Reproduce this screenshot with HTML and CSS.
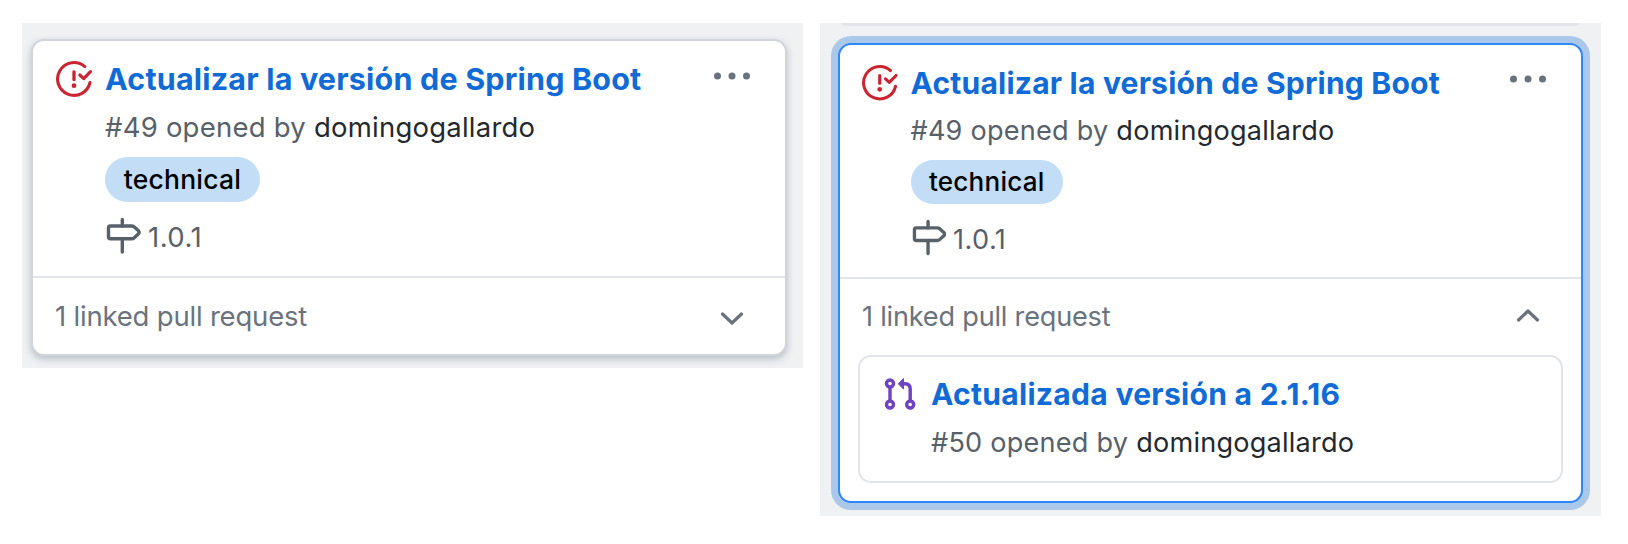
FILE: index.html
```html
<!DOCTYPE html>
<html lang="es">
<head>
<meta charset="utf-8">
<title>Project cards</title>
<link rel="stylesheet" href="styles.css">
</head>
<body>
<svg class="defs" aria-hidden="true">
  <symbol id="issue" viewBox="0 0 38 38">
    <g fill="none" stroke="currentColor" stroke-width="3.1" stroke-linecap="round" stroke-linejoin="round">
      <path d="M29.800 6.600A16.400 16.400 0 1 0 35 22.600"/>
      <path d="M24.800 15L28.700 18.600L35.500 11.600"/>
      <path d="M19 11.800V19.500" stroke-width="3.300"/>
    </g>
    <circle cx="19" cy="25.700" r="2.400" fill="currentColor"/>
  </symbol>
  <symbol id="milestone" viewBox="0 0 36 38">
    <g fill="none" stroke="currentColor" stroke-width="3.400" stroke-linecap="round" stroke-linejoin="round">
      <path d="M17.300 2.500V9M17.300 21.800V35"/>
      <path d="M5.300 9H26.500Q28 9 29 9.800L33.300 13.600Q35 15.300 33.300 17L29 20.900Q28 21.800 26.500 21.800H5.300Q3.500 21.800 3.500 20V10.800Q3.500 9 5.300 9Z"/>
    </g>
  </symbol>
  <symbol id="pull" viewBox="0 0 32 34">
    <g fill="none" stroke="currentColor" stroke-width="3.400">
      <circle cx="6" cy="6.500" r="3.500"/><circle cx="6" cy="27.500" r="3.500"/><circle cx="26.200" cy="27.500" r="3.500"/>
      <path d="M6 10V24M26.200 24V12Q26.200 6.800 21 6.800H18"/>
    </g>
    <path fill="currentColor" stroke="currentColor" stroke-linejoin="round" d="M14.300 6.800L19.500 1.500V12.100Z"/>
  </symbol>
</svg>
<main class="board">
  <section class="column">
    <article class="card">
      <div class="card-body">
        <svg class="icon-issue"><use href="#issue"/></svg>
        <div class="content">
          <h2 class="title">Actualizar la versión de Spring Boot</h2>
          <p class="meta">#49 opened by <span class="author">domingogallardo</span></p>
          <span class="label">technical</span>
          <p class="milestone"><svg class="icon-milestone"><use href="#milestone"/></svg><span>1.0.1</span></p>
        </div>
        <svg class="dots" viewBox="0 0 36 8"><circle cx="3.500" cy="4" r="3.500"/><circle cx="18" cy="4" r="3.500"/><circle cx="32.500" cy="4" r="3.500"/></svg>
      </div>
      <div class="linked"><span class="linked-text">1 linked pull request</span><svg class="chevron" viewBox="0 0 24 14"><path d="M2.500 2L12 11L21.500 2"/></svg></div>
    </article>
  </section>
  <section class="column column-open">
    <div class="previous"></div>
    <article class="card card-focus">
      <div class="card-body">
        <svg class="icon-issue"><use href="#issue"/></svg>
        <div class="content">
          <h2 class="title">Actualizar la versión de Spring Boot</h2>
          <p class="meta">#49 opened by <span class="author">domingogallardo</span></p>
          <span class="label">technical</span>
          <p class="milestone"><svg class="icon-milestone"><use href="#milestone"/></svg><span>1.0.1</span></p>
        </div>
        <svg class="dots" viewBox="0 0 36 8"><circle cx="3.500" cy="4" r="3.500"/><circle cx="18" cy="4" r="3.500"/><circle cx="32.500" cy="4" r="3.500"/></svg>
      </div>
      <div class="linked"><span class="linked-text">1 linked pull request</span><svg class="chevron" viewBox="0 0 24 14"><path d="M2.500 12L12 3L21.500 12"/></svg></div>
      <div class="request">
        <svg class="icon-pull"><use href="#pull"/></svg>
        <div class="request-content">
          <h3 class="title title-request">Actualizada versión a 2.1.16</h3>
          <p class="meta">#50 opened by <span class="author">domingogallardo</span></p>
        </div>
      </div>
    </article>
  </section>
</main>
</body>
</html>
```
FILE: styles.css
```css
* { box-sizing: border-box; }
body { margin: 0; background: #fff; font-family: Inter, "Liberation Sans", sans-serif; }
h2, h3, p { margin: 0; white-space: nowrap; }
.defs { display: block; width: 0; height: 0; }
svg { flex: none; }
.board { display: flex; align-items: flex-start; gap: 17px; padding: 23px 0 0 22px; }
.column { width: 781px; height: 345px; background: #eff1f3; padding: 16px 16px 0 9px; overflow: hidden; }
.card { height: 317px; border: 2px solid #d1d5da; border-radius: 13px; background: #fff; box-shadow: 0 3px 7px rgba(120, 130, 145, .45); }
.card-body { display: flex; height: 237px; border-bottom: 2px solid #e1e4e8; padding: 18px 0 0 22px; }
.icon-issue { width: 38px; height: 38px; margin-top: 1px; margin-left: -0.500px; color: #cb2431; }
.content { flex: 1; margin-left: 12.500px; }
.title { font-size: 30.500px; font-weight: 700; line-height: 40px; letter-spacing: 0.180px; color: #116bd6; }
.meta { margin-top: 8px; font-size: 27.500px; letter-spacing: 0.230px; line-height: 40px; color: #586069; }
.author { color: #24292e; }
.label { display: block; width: 155px; height: 45px; margin-top: 10px; border-radius: 23px; background: #c2ddf5; color: #000; font-size: 26.500px; font-weight: 500; letter-spacing: 0.200px; line-height: 45px; text-align: center; }
.milestone { display: flex; align-items: center; gap: 7px; margin-top: 15px; font-size: 27.500px; letter-spacing: 0.450px; line-height: 40px; color: #586069; }
.icon-milestone { width: 36px; height: 38px; margin-top: -2px; color: #586069; }
.dots { width: 36px; height: 8px; margin: 12.500px 35px 0 0; fill: #6a737d; }
.linked { display: flex; justify-content: space-between; align-items: flex-start; height: 76px; padding: 18px 41px 0 22px; font-size: 27.500px; letter-spacing: -0.200px; line-height: 40px; color: #6a737d; }
.chevron { width: 24px; height: 14px; margin-top: 16px; fill: none; stroke: #6a737d; stroke-width: 3.200; stroke-linecap: round; stroke-linejoin: round; }

.column-open { height: 493px; padding: 0 18px; }
.previous { height: 3px; margin: 0 4px; border-radius: 0 0 10px 10px; background: #e1e4e8; }
.card-focus { height: 460px; margin-top: 17px; border-color: #2f88f8; box-shadow: 0 0 0 7px #abc8eb; }
.card-focus .card-body { height: 234px; padding-top: 18px; padding-left: 21.500px; }
.card-focus .content { margin-left: 12px; }
.card-focus .icon-issue { width: 37.500px; height: 37.500px; margin-top: 0.500px; }
.card-focus .title { font-size: 30.100px; }
.card-focus .title-request { letter-spacing: 0.260px; }
.card-focus .meta { margin-top: 8px; font-size: 27.100px; }
.card-focus .label { width: 152.500px; height: 44px; margin-top: 9px; line-height: 44px; font-size: 26.100px; }
.card-focus .milestone { margin-top: 16px; font-size: 27.100px; }
.card-focus .icon-milestone { width: 35.500px; height: 37.500px; margin-top: -4px; }
.card-focus .dots { margin-top: 12px; }
.card-focus .linked { font-size: 27.100px; padding-left: 22px; padding-top: 18px; }
.card-focus .chevron { margin-top: 11px; }
.request { display: flex; width: 705px; height: 128px; margin-left: 18px; border: 2px solid #e1e4e8; border-radius: 13px; padding: 17px 0 0 24px; }
.icon-pull { width: 32px; height: 34px; margin-top: 3px; color: #6f42c1; }
.request-content { margin-left: 15px; }
.request-content .meta { margin-top: 9px; }
```
